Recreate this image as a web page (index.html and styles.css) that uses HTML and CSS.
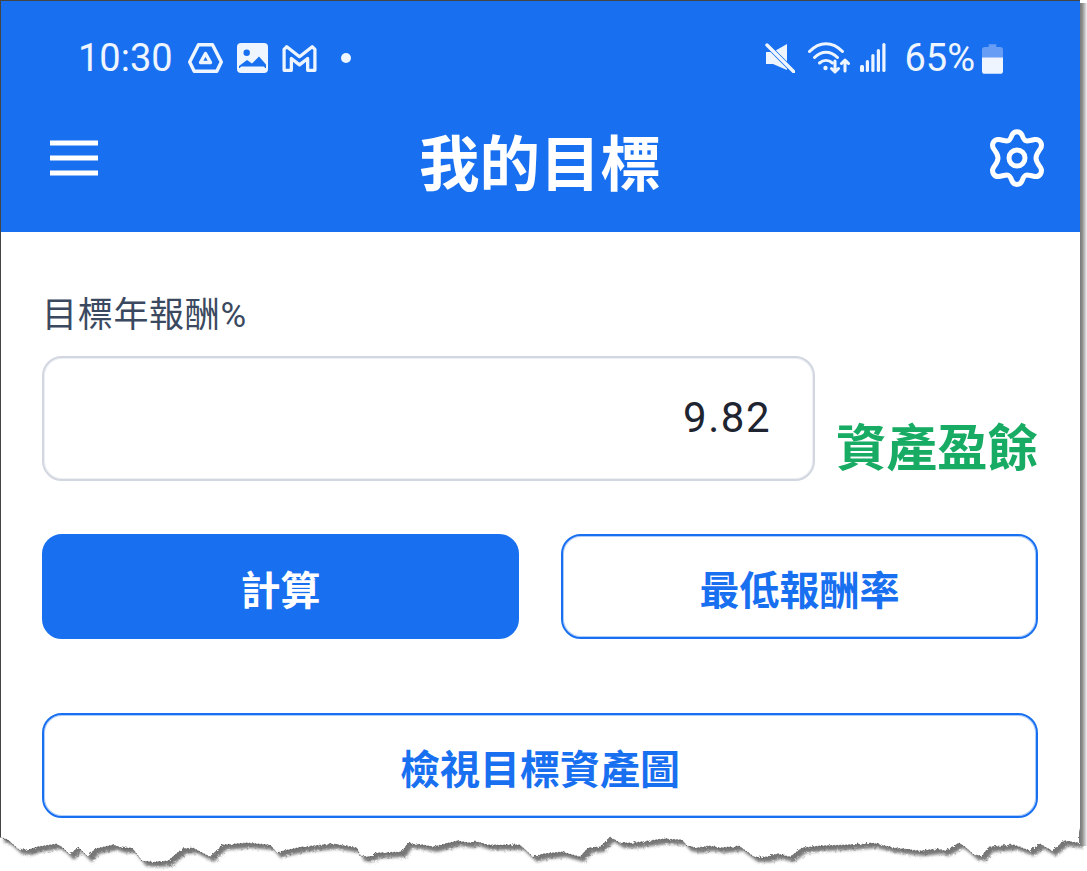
FILE: index.html
```html
<!DOCTYPE html>
<html lang="zh-Hant">
<head>
  <meta charset="UTF-8">
  <title>我的目標</title>
  <link rel="stylesheet" href="styles.css">
</head>
<body>
  <div class="shot">
    <!-- Blue header with status bar -->
    <header class="header">
      <div class="status-bar">
        <div class="status-left">
          <span class="clock">10:30</span>
          <svg class="status-icon drive" width="35" height="30" viewBox="0 0 35 30" fill="none" stroke="#eef5ff" stroke-width="3.400" stroke-linejoin="round">
            <path d="M10.500 1.700h14L33.300 19l-4.500 9.300H6.200L1.700 19z"/>
            <path d="M17.500 10.500l5 9H12.500z"/>
          </svg>
          <svg class="status-icon photo" width="31" height="30" viewBox="0 0 31 30">
            <rect width="31" height="30" rx="4" fill="#eef5ff"/>
            <circle cx="9.700" cy="9.700" r="3.200" fill="#1870f0"/>
            <path d="M2 23l8-6 5 3.500 7-7 7 8v3.500H2z" fill="#1870f0"/>
            <rect x="3" y="23.500" width="25" height="3.500" rx="1.700" fill="#eef5ff"/>
          </svg>
          <svg class="status-icon gmail" width="35" height="29" viewBox="0 0 38 32" fill="none" stroke="#eef5ff" stroke-width="3.600" stroke-linejoin="round">
            <path d="M2 6l3-3 14 11L33 3l3 3v23h-8V16l-9 7-9-7v13H2z"/>
          </svg>
          <span class="dot"></span>
        </div>
        <div class="status-right">
          <svg class="status-icon mute" width="30" height="30" viewBox="0 0 30 30">
            <path d="M1 9h7L22 1v26L8 21H1z" fill="#eef5ff"/>
            <path d="M2 2l27 27" stroke="#1870f0" stroke-width="5"/>
            <path d="M2 2l27 27" stroke="#eef5ff" stroke-width="3.400" stroke-linecap="round"/>
          </svg>
          <svg class="status-icon wifi" width="42" height="32" viewBox="0 0 42 32" fill="none" stroke="#eef5ff" stroke-width="3" stroke-linecap="round" stroke-linejoin="round">
            <path d="M1.500 9.500c10-10.500 23-10.500 33 0"/>
            <path d="M6.500 15.500c7-7 16-7 23 0"/>
            <path d="M11.500 21c4-3.500 9-3.500 13 0"/>
            <circle cx="17.500" cy="26" r="2.200" fill="#eef5ff" stroke="none"/>
            <path d="M27 19v11M23.500 26.500l3.500 3.500 3.500-3.500"/>
            <path d="M37 29V18M33.500 21.500l3.500-3.500 3.500 3.500"/>
          </svg>
          <svg class="status-icon signal" width="26" height="30" viewBox="0 0 26 30" fill="#eef5ff">
            <rect x="0" y="22" width="4" height="7" rx="1.500"/>
            <rect x="5.800" y="17" width="3.200" height="12" rx="1.500"/>
            <rect x="11.300" y="11" width="3.200" height="18" rx="1.500"/>
            <rect x="16.800" y="6" width="3.200" height="23" rx="1.500"/>
            <rect x="22.300" y="0" width="3.200" height="29" rx="1.500"/>
          </svg>
          <span class="battery-text">65%</span>
          <svg class="status-icon battery" width="21" height="31" viewBox="0 0 22 32">
            <path d="M7 1h8v3h4a3 3 0 0 1 3 3v9H0V7a3 3 0 0 1 3-3h4z" fill="#679df5"/>
            <path d="M0 15h22v14a3 3 0 0 1-3 3H3a3 3 0 0 1-3-3z" fill="#eef5ff"/>
          </svg>
        </div>
      </div>
      <div class="app-bar">
        <button class="icon-btn" aria-label="menu">
          <svg width="48" height="36" viewBox="0 0 48 36" stroke="#fff" stroke-width="5">
            <path d="M0 3h48M0 18h48M0 33h48"/>
          </svg>
        </button>
        <h1 class="title">我的目標</h1>
        <button class="icon-btn" aria-label="settings">
          <svg width="54" height="58" viewBox="-1 0 54 58" fill="none" stroke="#fff" stroke-width="5" stroke-linejoin="round">
            <path d="M16 12C19 12 20 9 21 6C23 1.500 29 1.500 31 6C32 9 33 12 36 12C38 12 41 11 44 10.500C49 10 52 15 49.500 19.500C48 22 45 25 45 29C45 33 48 36 49.500 38.500C52 43 49 48 44 47.500C41 47 38 46 36 46C33 46 32 49 31 52C29 56.500 23 56.500 21 52C20 49 19 46 16 46C14 46 11 47 8 47.500C3 48 0 43 2.500 38.500C4 36 7 33 7 29C7 25 4 22 2.500 19.500C0 15 3 10 8 10.500C11 11 14 12 16 12Z"/>
            <circle cx="26" cy="29" r="8"/>
          </svg>
        </button>
      </div>
    </header>

    <!-- Form -->
    <main class="content">
      <label class="field-label" for="rate">目標年報酬%</label>
      <div class="field-row">
        <input class="rate-input" id="rate" type="text" value="9.82">
        <span class="surplus">資產盈餘</span>
      </div>
      <div class="btn-row">
        <button class="btn btn-solid">計算</button>
        <button class="btn btn-outline">最低報酬率</button>
      </div>
      <button class="btn btn-outline btn-wide">檢視目標資產圖</button>
    </main>

    <!-- Torn paper edge at the bottom of the screenshot -->
    <svg class="torn" width="1087" height="46" viewBox="0 825 1087 46">
      <defs>
        <path id="edge" d="M0 837 L8 840 L18 849 L28 850 L37 847 L57 844 L63 848 L70 855 L78 847 L88 857 L95 849 L113 845 L122 848 L132 848 L142 861 L153 862 L168 861 L182 849 L193 848 L210 857 L222 845 L247 843 L270 845 L277 853 L283 851 L302 847 L333 844 L357 848 L360 856 L368 857 L377 853 L402 852 L408 843 L423 845 L433 847 L457 841 L470 843 L475 841 L487 845 L520 845 L533 857 L543 854 L562 852 L580 857 L588 848 L600 847 L610 837 L620 843 L633 843 L663 839 L682 840 L687 846 L697 848 L709 846 L720 848 L739 846 L754 857 L767 857 L777 854 L790 857 L802 848 L820 846 L847 845 L872 843 L894 848 L920 851 L937 849 L945 851 L959 843 L965 847 L974 855 L982 856 L989 847 L1014 845 L1030 851 L1040 844 L1052 851 L1064 841 L1079 843"/>
        <path id="paper" d="M0 837 L8 840 L18 849 L28 850 L37 847 L57 844 L63 848 L70 855 L78 847 L88 857 L95 849 L113 845 L122 848 L132 848 L142 861 L153 862 L168 861 L182 849 L193 848 L210 857 L222 845 L247 843 L270 845 L277 853 L283 851 L302 847 L333 844 L357 848 L360 856 L368 857 L377 853 L402 852 L408 843 L423 845 L433 847 L457 841 L470 843 L475 841 L487 845 L520 845 L533 857 L543 854 L562 852 L580 857 L588 848 L600 847 L610 837 L620 843 L633 843 L663 839 L682 840 L687 846 L697 848 L709 846 L720 848 L739 846 L754 857 L767 857 L777 854 L790 857 L802 848 L820 846 L847 845 L872 843 L894 848 L920 851 L937 849 L945 851 L959 843 L965 847 L974 855 L982 856 L989 847 L1014 845 L1030 851 L1040 844 L1052 851 L1064 841 L1079 843 L1079 825 L0 825 Z"/>
        <filter id="blur" x="-2%" y="-20%" width="104%" height="140%">
          <feGaussianBlur stdDeviation="1.500"/>
        </filter>
        <filter id="rough" filterUnits="userSpaceOnUse" x="0" y="825" width="1087" height="46">
          <feTurbulence type="fractalNoise" baseFrequency="0.35" numOctaves="2" seed="4"/>
          <feDisplacementMap in="SourceGraphic" scale="3"/>
        </filter>
      </defs>
      <g filter="url(#rough)">
        <g filter="url(#blur)" transform="translate(4 5)">
          <use href="#paper" class="torn-shadow"/>
        </g>
        <use href="#paper" class="torn-paper"/>
        <use href="#edge" class="torn-line"/>
      </g>
    </svg>
  </div>
</body>
</html>
```
FILE: styles.css
```css
:root {
  --blue: #1870f0;
  --status: #eef5ff;
  --text: #1f2530;
  --label: #3a4960;
  --green: #17ab63;
}

html, body {
  margin: 0;
  height: 100%;
  background: #fff;
}

body {
  font-family: "Roboto", "Noto Sans CJK TC", sans-serif;
  overflow: hidden;
}

/* paper with a dark hairline and a soft shadow on the right */
.shot {
  position: relative;
  width: 1087px;
  height: 871px;
  box-sizing: border-box;
  padding-right: 7px;
  overflow: hidden;
}

.shot::before {
  content: "";
  position: absolute;
  z-index: 1;
  top: 0;
  left: 0;
  bottom: 34px;
  width: 1px;
  background: #444;
}

.shot::after {
  content: "";
  position: absolute;
  top: 3px;
  right: 0;
  bottom: 25px;
  width: 7px;
  background: linear-gradient(90deg, #7a7a7a 0%, #8a8a8a 30%, #b5b5b5 60%, #f2f2f2 100%);
}

.header {
  background: var(--blue);
  height: 232px;
  box-sizing: border-box;
  border-top: 1px solid #444;
}

.status-bar {
  display: flex;
  justify-content: space-between;
  align-items: center;
  height: 32px;
  padding: 41px 77px 0 78px;
  color: var(--status);
}

.status-left,
.status-right {
  display: flex;
  align-items: center;
}

.status-icon {
  flex: none;
}

.clock {
  font-size: 38px;
}

.drive {
  margin-left: 15px;
}

.photo,
.gmail {
  margin-left: 14px;
}

.dot {
  width: 10px;
  height: 10px;
  margin-left: 24px;
  border-radius: 50%;
  background: var(--status);
}

.wifi {
  margin-left: 13px;
}

.signal {
  margin-left: 10px;
}

.battery-text {
  margin-left: 18px;
  font-size: 38px;
}

.battery {
  margin-left: 7px;
}

.app-bar {
  display: flex;
  justify-content: space-between;
  align-items: center;
  height: 80px;
  margin-top: 44px;
  padding: 0 36px 0 50px;
}

.icon-btn {
  display: flex;
  padding: 0;
  border: 0;
  background: none;
}

.title {
  margin: 0 8px 0 0;
  padding-top: 16px;
  color: #fff;
  font-size: 60.500px;
  font-weight: 700;
  line-height: 80px;
}

.content {
  padding: 60px 42px 0 42px;
}

.field-label {
  display: block;
  color: var(--label);
  font-size: 35px;
  letter-spacing: 0.700px;
  line-height: 48px;
}

.field-row {
  display: flex;
  align-items: flex-end;
  justify-content: space-between;
  margin-top: 16px;
}

.rate-input {
  width: 773px;
  height: 125px;
  box-sizing: border-box;
  padding: 0 42px 3px 0;
  border: 2px solid #d2d6e0;
  border-radius: 20px;
  box-shadow: inset 0 0 0 1px rgba(210, 214, 224, 0.4);
  color: var(--text);
  font-family: inherit;
  font-size: 42px;
  letter-spacing: 1.500px;
  text-align: right;
  outline: none;
}

.surplus {
  color: var(--green);
  font-size: 50.500px;
  font-weight: 700;
  line-height: 66px;
  margin-bottom: -1px;
}

.btn-row {
  display: flex;
  justify-content: space-between;
  margin-top: 53px;
}

.btn {
  width: 477px;
  height: 105px;
  box-sizing: border-box;
  padding-top: 4px;
  border: 2px solid var(--blue);
  border-radius: 20px;
  font-family: inherit;
  font-size: 40px;
  font-weight: 700;
}

.btn-solid {
  background: var(--blue);
  color: #fff;
}

.btn-outline {
  background: #fff;
  box-shadow: inset 0 0 0 1px rgba(24, 112, 240, 0.35);
  color: var(--blue);
}

.btn-wide {
  display: block;
  width: 100%;
  margin-top: 74px;
}

.torn {
  position: absolute;
  left: 0;
  bottom: 0;
}

.torn-shadow {
  fill: #777;
}

.torn-paper {
  fill: #fff;
}

.torn-line {
  fill: none;
  stroke: #444;
  stroke-width: 0.800;
  stroke-dasharray: 1.500 1.500;
}
```
